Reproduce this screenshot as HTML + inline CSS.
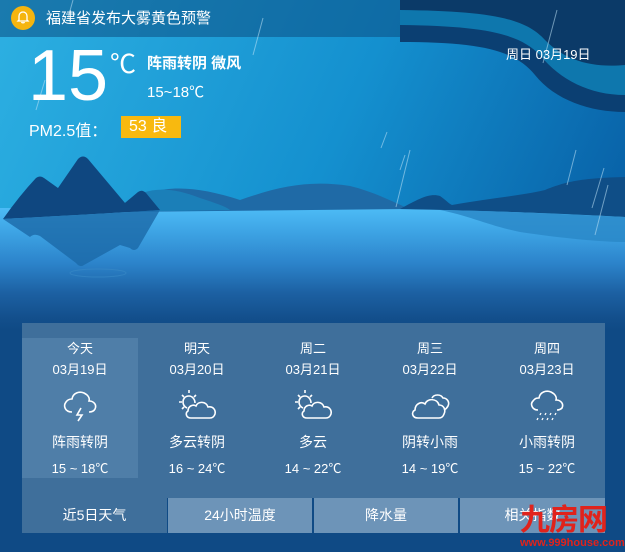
<!DOCTYPE html>
<html><head><meta charset="utf-8"><style>
*{margin:0;padding:0;box-sizing:border-box}
body{width:625px;height:552px;overflow:hidden;font-family:"Liberation Sans","Noto Sans CJK SC",sans-serif;color:#fff;position:relative;background:#0e4b82}
#bg{position:absolute;left:0;top:0}
.abs{position:absolute;white-space:nowrap}
.col{position:absolute;top:338px;width:116px;text-align:center;font-size:13px}
.col .d{height:21px;line-height:21px}
.col svg{display:block;margin:6px auto 0}
.col .w{margin-top:8px;font-size:14px}
.col .t{margin-top:6px}
.tab{position:absolute;top:498px;height:35px;line-height:35px;text-align:center;font-size:14px}
</style></head><body>
<svg id="bg" width="625" height="552" viewBox="0 0 625 552">
<defs>
<linearGradient id="sky" x1="0" y1="0" x2="1" y2="0.4"><stop offset="0" stop-color="#2db0e2"/><stop offset="0.55" stop-color="#1490cf"/><stop offset="1" stop-color="#0860a6"/></linearGradient>
<linearGradient id="water" x1="0" y1="208" x2="0" y2="330" gradientUnits="userSpaceOnUse"><stop offset="0" stop-color="#4dbcf6"/><stop offset="0.2" stop-color="#3da3e4"/><stop offset="0.45" stop-color="#2c84cb"/><stop offset="0.7" stop-color="#1c60a2"/><stop offset="0.9" stop-color="#134f8c"/><stop offset="1" stop-color="#0f4a85"/></linearGradient>
</defs>
<rect width="625" height="552" fill="url(#sky)"/>
<rect x="0" y="0" width="625" height="37" fill="#0b4f84" opacity="0.55"/>
<path d="M400 0 H625 V112 C590 112 555 100 535 75 C515 50 480 42 400 42 Z" fill="#0b3f72"/>
<path d="M400 0 H625 V95 C590 95 560 80 540 55 C520 35 490 26 400 25 Z" fill="#0e77ad"/>
<path d="M400 0 H625 V65 C590 68 565 60 545 40 C525 18 490 11 400 10 Z" fill="#0b3a68"/>
<rect x="0" y="208" width="625" height="344" fill="url(#water)"/>
<path d="M115 212 C150 182 190 184 240 200 C280 186 310 180 350 186 C375 192 395 203 410 209Z" fill="#1f6aa6"/>
<path d="M115 212 C135 190 160 182 200 198 C215 203 225 206 230 210Z" fill="#1b7fb8"/>
<path d="M400 209 C420 198 430 193 440 196 C446 200 448 203 452 205 C490 198 520 196 545 190 C565 182 580 178 625 177 L625 217 C570 214 500 211 400 209Z" fill="#0f4e87"/>
<path d="M440 210 C470 216 490 226 520 232 C560 238 600 242 625 242 L625 217 C560 214 500 211 440 210Z" fill="#2a88c8" opacity="0.85"/>
<path d="M3 219 Q20 195 36 178 Q40 175 44 178 L58 188 L78 159 Q83 154 88 159 L125 203 L138 192 Q142 189 146 193 L160 210 C100 214 40 217 3 219Z" fill="#0f4780"/>
<path d="M3 219 C40 217 100 214 160 210 L138 248 Q134 252 130 248 L120 245 L84 265 Q80 268 76 263 L40 236 Q34 233 30 237 Z" fill="#1c69a8" opacity="0.8"/>
<ellipse cx="98" cy="273" rx="28" ry="4" fill="none" stroke="#3a8bc6" stroke-width="1" opacity="0.6"/>
<g stroke="#bfe3f7" stroke-width="1" opacity="0.55">
<line x1="73" y1="0" x2="68" y2="18"/><line x1="263" y1="18" x2="253" y2="55"/><line x1="45" y1="80" x2="36" y2="110"/>
<line x1="410" y1="150" x2="396" y2="207"/><line x1="387" y1="132" x2="381" y2="148"/><line x1="557" y1="10" x2="543" y2="63"/>
<line x1="576" y1="150" x2="567" y2="185"/><line x1="604" y1="168" x2="592" y2="208"/><line x1="608" y1="185" x2="595" y2="235"/><line x1="405" y1="155" x2="400" y2="170"/>
</g>
<rect x="22" y="323" width="583" height="175" fill="#3f6f9b"/>
<rect x="22" y="338" width="116" height="140" fill="#5583ac" opacity="0.75"/>
</svg>

<div class="abs" style="left:11px;top:6px;width:24px;height:24px;border-radius:50%;background:#f5b50f"></div>
<svg class="abs" style="left:15px;top:9px" width="16" height="16" viewBox="0 0 16 16"><path d="M4 11 L4 7 C4 4.5 6 3 8 3 C10 3 12 4.5 12 7 L12 11 L13 12 L3 12Z M6.5 13 C7 14.2 9 14.2 9.5 13" fill="none" stroke="#fff" stroke-width="1.3"/></svg>
<div class="abs" style="left:46px;top:7px;font-size:15px">福建省发布大雾黄色预警</div>
<div class="abs" style="left:28px;top:36px;font-size:72px;line-height:80px;font-weight:300">15</div>
<div class="abs" style="left:110px;top:44px;font-size:26px">℃</div>
<div class="abs" style="left:147px;top:52px;font-size:15px;font-weight:bold">阵雨转阴 微风</div>
<div class="abs" style="left:147px;top:81px;font-size:15px">15~18℃</div>
<div class="abs" style="left:29px;top:117px;font-size:16px">PM2.5值：</div>
<div class="abs" style="left:121px;top:116px;width:60px;height:22px;background:#f8b90f;font-size:16px;line-height:22px;padding-left:8px">53 良</div>
<div class="abs" style="left:506px;top:44px;font-size:13px">周日 03月19日</div>

<div class="col" style="left:22px"><div class="d">今天</div><div class="d">03月19日</div>
<svg width="40" height="38" viewBox="0 0 40 38" fill="none" stroke="#fff" stroke-width="1.6"><path d="M12 26 C5 26 3 20 6 16 C8 13 11 13 12 13 C13 7 19 5 24 7 C28 9 30 12 29 15 C34 15 37 19 35 23 C34 25 32 26 29 26"/><path d="M21 22 L17 29 L22 29 L18 35"/></svg>
<div class="w">阵雨转阴</div><div class="t">15 ~ 18℃</div></div>
<div class="col" style="left:139px"><div class="d">明天</div><div class="d">03月20日</div>
<svg width="44" height="38" viewBox="0 0 44 38" fill="none" stroke="#fff" stroke-width="1.6"><path d="M20 17 C20 13 17 10 14 10 C10 10 8 13 8 16 C8 19 10 21 12 22"/><path d="M14 4 V7 M4 16 H7 M7 9 L9 11 M21 9 L19 11 M7 23 L9 21"/><path d="M16 32 C11 32 10 27 13 25 C13 20 18 18 21 20 C23 15 31 15 33 21 C38 20 41 24 40 28 C39 31 37 32 35 32Z"/></svg>
<div class="w">多云转阴</div><div class="t">16 ~ 24℃</div></div>
<div class="col" style="left:255px"><div class="d">周二</div><div class="d">03月21日</div>
<svg width="44" height="38" viewBox="0 0 44 38" fill="none" stroke="#fff" stroke-width="1.6"><path d="M20 17 C20 13 17 10 14 10 C10 10 8 13 8 16 C8 19 10 21 12 22"/><path d="M14 4 V7 M4 16 H7 M7 9 L9 11 M21 9 L19 11 M7 23 L9 21"/><path d="M16 32 C11 32 10 27 13 25 C13 20 18 18 21 20 C23 15 31 15 33 21 C38 20 41 24 40 28 C39 31 37 32 35 32Z"/></svg>
<div class="w">多云</div><div class="t">14 ~ 22℃</div></div>
<div class="col" style="left:372px"><div class="d">周三</div><div class="d">03月22日</div>
<svg width="44" height="38" viewBox="0 0 44 38" fill="none" stroke="#fff" stroke-width="1.6"><path d="M24 12 C26 8 33 8 35 12 C39 12 42 16 40 20 C39 22 38 23 36 24"/><path d="M10 32 C4 32 3 26 7 24 C7 18 13 15 17 18 C19 12 29 12 31 19 C36 19 38 24 36 28 C35 31 33 32 31 32Z"/></svg>
<div class="w">阴转小雨</div><div class="t">14 ~ 19℃</div></div>
<div class="col" style="left:489px"><div class="d">周四</div><div class="d">03月23日</div>
<svg width="40" height="38" viewBox="0 0 40 38" fill="none" stroke="#fff" stroke-width="1.6"><path d="M11 24 C5 24 3 18 6 15 C8 12 10 12 12 12 C13 6 19 4 24 6 C28 8 30 11 29 14 C34 14 37 18 35 22 C34 23 32 24 30 24"/><path d="M14 27 L13 29 M19 27 L18 29 M24 27 L23 29 M29 27 L28 29 M11 32 L10 34 M16 32 L15 34 M21 32 L20 34 M26 32 L25 34" stroke-width="1.3"/></svg>
<div class="w">小雨转阴</div><div class="t">15 ~ 22℃</div></div>

<div class="tab" style="left:22px;width:145px;background:#3f6f9b">近5日天气</div>
<div class="tab" style="left:168px;width:144px;background:#6d94b8">24小时温度</div>
<div class="tab" style="left:314px;width:144px;background:#6d94b8">降水量</div>
<div class="tab" style="left:460px;width:145px;background:#6d94b8">相关指数</div>
<div class="abs" style="left:520px;top:505px;font-size:30px;line-height:32px;color:#e0231c;font-weight:bold;letter-spacing:-1px">九房网</div>
<div class="abs" style="left:520px;top:537px;font-size:11px;line-height:12px;color:#e0231c;font-weight:bold">www.999house.com</div>
</body></html>
